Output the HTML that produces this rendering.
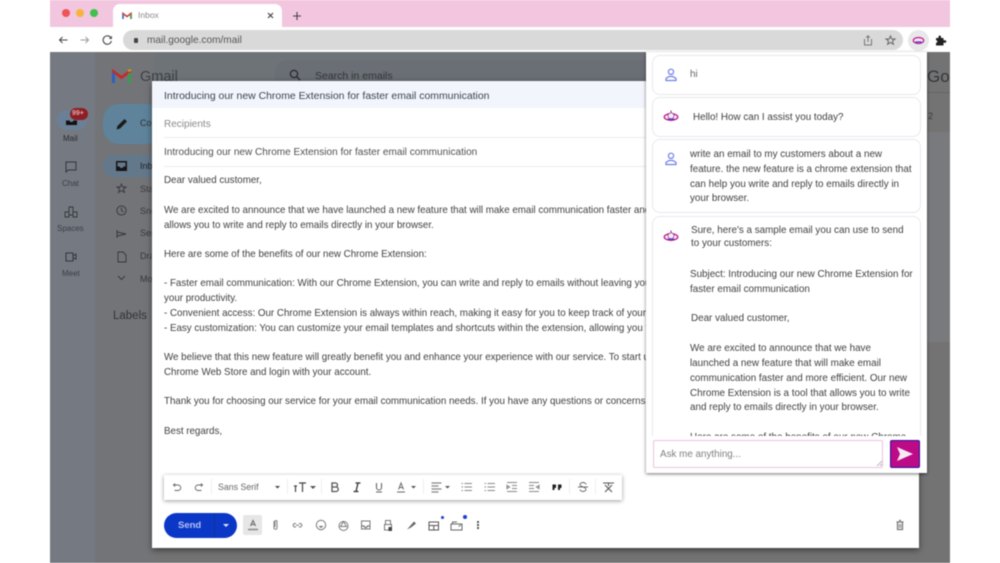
<!DOCTYPE html>
<html><head><meta charset="utf-8">
<style>
html,body{margin:0;padding:0;width:1000px;height:563px;overflow:hidden;background:#fff;font-family:"Liberation Sans",sans-serif}
#r{position:relative;width:1000px;height:563px;overflow:hidden;filter:blur(.65px)}
#r div,#r span.a{position:absolute}
.t{white-space:nowrap;font-size:9.78px;color:#404040;line-height:12px;margin-top:1px}
.g{white-space:nowrap;font-size:8px;color:#2a2e33;line-height:10px}
.c{white-space:nowrap;font-size:9.85px;color:#404040;line-height:12px;margin-top:1px}
.card{background:#fff;border:1px solid #e9e9ee;border-radius:8px;box-sizing:border-box}
svg{position:absolute;overflow:visible}
</style></head><body>
<div id="r">
<div style="left:50px;top:0;width:900px;height:27px;background:#f1c6de"></div>
<div style="left:50px;top:27px;width:900px;height:25px;background:#fff"></div>
<div style="left:62px;top:9px;width:8px;height:8px;border-radius:50%;background:#f0535a"></div>
<div style="left:76px;top:9px;width:8px;height:8px;border-radius:50%;background:#f5b53c"></div>
<div style="left:90px;top:9px;width:8px;height:8px;border-radius:50%;background:#3fc04d"></div>
<div style="left:113px;top:4px;width:169px;height:23px;background:#fff;border-radius:7px 7px 0 0"></div>
<svg style="left:122px;top:12px" width="10" height="8" viewBox="0 0 10 8"><path d="M1 7V1.5L5 4.5 9 1.5V7" fill="none" stroke="#d8392c" stroke-width="1.6"/><path d="M1 7V2" stroke="#3b78e0" stroke-width="1.6"/><path d="M9 7V2" stroke="#34a853" stroke-width="1.6"/></svg>
<div class="g" style="left:138px;top:10px;color:#8a8a8a;font-size:8.5px">Inbox</div>
<svg style="left:267px;top:12px" width="7" height="7"><path d="M1 1L6 6M6 1L1 6" stroke="#444" stroke-width="1.2"/></svg>
<svg style="left:292px;top:11px" width="10" height="10"><path d="M5 1V9M1 5H9" stroke="#444" stroke-width="1.1"/></svg>
<svg style="left:58px;top:35px" width="10" height="10"><path d="M9.5 5H1.500M4.500 2L1.500 5 4.500 8" fill="none" stroke="#444" stroke-width="1"/></svg>
<svg style="left:80px;top:35px" width="10" height="10"><path d="M.5 5H8.500M5.500 2L8.500 5 5.500 8" fill="none" stroke="#999" stroke-width="1"/></svg>
<svg style="left:102px;top:35px" width="11" height="10"><path d="M9 3A4.200 4.200 0 1 0 9.400 6" fill="none" stroke="#555" stroke-width="1.200"/><path d="M10 .8V4H6.800Z" fill="#555"/></svg>
<div style="left:123px;top:30px;width:780px;height:20px;border-radius:10px;background:#d9d9d9"></div>
<div style="left:133.500px;top:38px;width:4px;height:5px;background:#444;border-radius:1px"></div>
<div class="g" style="left:147px;top:36px;font-size:10.100px;color:#555">mail.google.com/mail</div>
<svg style="left:863px;top:35px" width="10" height="11"><path d="M2 4.500H1.500V10H8.500V4.500H8M5 7V1M3.200 2.600L5 .8 6.800 2.600" fill="none" stroke="#777" stroke-width="1"/></svg>
<svg style="left:885px;top:35px" width="11" height="10"><path d="M5.500 1L6.800 4H10L7.500 6 8.400 9.300 5.500 7.500 2.600 9.300 3.500 6 1 4H4.200Z" fill="none" stroke="#666" stroke-width="1"/></svg>
<div style="left:908px;top:30px;width:21px;height:21px;border-radius:50%;background:#e8e8ea"></div>
<svg style="left:912px;top:35px" width="13" height="10" viewBox="0 0 13 10"><ellipse cx="6.500" cy="5.500" rx="5.200" ry="3" fill="#f4e6f0" stroke="#c0168f" stroke-width="1.200"/><path d="M3.500 7H9.500" stroke="#3131c8" stroke-width="1.200"/></svg>
<svg style="left:935px;top:35px" width="11" height="11"><path d="M1 3H3.500V1.500A1.300 1.300 0 0 1 6 1.500V3H8.500V5.200H10A1.300 1.300 0 0 1 10 7.800H8.500V10.500H1V7.800A1.300 1.300 0 0 0 1 5.200Z" fill="#222"/></svg>

<div style="left:50px;top:52px;width:900px;height:511px;background:#737373"></div>
<div style="left:50px;top:52px;width:45px;height:511px;background:#757a82"></div>
<div style="left:95px;top:52px;width:60px;height:511px;background:#737478"></div>
<div style="left:155px;top:52px;width:500px;height:30px;background:#6e7378"></div>
<svg style="left:111px;top:68px" width="21" height="16" viewBox="0 0 21 16"><path d="M2.500 15V3.500L10.500 9.500 18.500 3.500V15" fill="none" stroke="#c62a2a" stroke-width="2.800"/><path d="M2.500 15V5" stroke="#2a62c0" stroke-width="3"/><path d="M18.500 15V5" stroke="#3d9a50" stroke-width="3"/><path d="M17 3L20 2" stroke="#c4a01c" stroke-width="2.200"/></svg>
<div class="g" style="left:140px;top:69px;font-size:14.500px;line-height:16px;color:#3c4044">Gmail</div>
<div style="left:275px;top:60px;width:380px;height:30px;border-radius:12px 0 0 0;background:#6a6f75"></div>
<svg style="left:289px;top:69px" width="12" height="12"><circle cx="5" cy="5" r="3.600" fill="none" stroke="#26282b" stroke-width="1.200"/><path d="M7.700 7.700L11 11" stroke="#26282b" stroke-width="1.300"/></svg>
<div class="g" style="left:315px;top:70px;font-size:10.500px;line-height:13px;color:#33363a">Search in emails</div>
<div class="g" style="left:927px;top:68px;font-size:17px;line-height:18px;color:#33363a">Go</div>
<div class="g" style="left:928px;top:111px;font-size:9px;color:#3a3a3a">2</div>
<div style="left:927px;top:92px;width:23px;height:1px;background:#666"></div>
<div style="left:927px;top:132px;width:23px;height:210px;background:#797a7e"></div>

<div style="left:57px;top:110px;width:30px;height:20px;border-radius:10px;background:#6b8096"></div>
<svg style="left:66px;top:115px" width="11" height="10"><path d="M0 2H11V10H0Z" fill="#111"/><path d="M0 2H11V6H8L6.500 7.500H4.500L3 6H0Z" fill="#6b8096"/><path d="M0 6H3L4.500 7.500H6.500L8 6H11" stroke="#111" fill="none"/></svg>
<div style="left:70px;top:108px;width:18px;height:12px;border-radius:6px;background:#8e1f24"></div>
<div class="g" style="left:72px;top:109px;font-size:7px;font-weight:bold;color:#d8a9aa">99+</div>
<div class="g" style="left:63px;top:134px;font-size:8px;color:#2a2a2a">Mail</div>
<svg style="left:65px;top:161px" width="12" height="12"><path d="M1 1H11V9H3L1 11Z" fill="none" stroke="#33363b" stroke-width="1"/></svg>
<div class="g" style="left:62px;top:179px;color:#3a3e44">Chat</div>
<svg style="left:64px;top:206px" width="14" height="12"><path d="M1 6H5V11H1ZM9 6H13V11H9ZM5 1H9V9H5Z" fill="none" stroke="#33363b" stroke-width=".9"/></svg>
<div class="g" style="left:57px;top:224px;color:#3a3e44">Spaces</div>
<svg style="left:65px;top:251px" width="13" height="12"><path d="M1 2H8V10H1Z M8 5L11 3V8L8 7" fill="none" stroke="#33363b" stroke-width="1"/></svg>
<div class="g" style="left:62px;top:269px;color:#3a3e44">Meet</div>
<div style="left:103px;top:104px;width:60px;height:40px;border-radius:16px;background:#5f839b"></div>
<svg style="left:115px;top:117px" width="14" height="14"><path d="M1.500 12.500L2.500 9 9.500 2 12 4.500 5 11.500Z" fill="#1a1a1a"/></svg>
<div class="g" style="left:140px;top:118px;font-size:9px;color:#2e3135">Compose</div>
<div style="left:103px;top:155px;width:60px;height:22px;border-radius:11px 0 0 11px;background:#64788c"></div>
<svg style="left:116px;top:160px" width="11" height="11"><path d="M0 1H11V11H0Z" fill="#151515"/><path d="M1.500 2.500H9.500V6.500H7.500L6.500 8H4.500L3.500 6.500H1.500Z" fill="#64788c"/></svg>
<div class="g" style="left:140px;top:161px;font-size:9px;color:#1d2023">Inbox</div>
<svg style="left:116px;top:183px" width="11" height="11"><path d="M5.500 1L6.800 4H10L7.500 6 8.400 9.500 5.500 7.500 2.600 9.500 3.500 6 1 4H4.200Z" fill="none" stroke="#33363b" stroke-width=".9"/></svg>
<div class="g" style="left:140px;top:184px;font-size:9px;color:#36393d">Starred</div>
<svg style="left:116px;top:205px" width="11" height="11"><circle cx="5.500" cy="5.500" r="4.600" fill="none" stroke="#33363b" stroke-width=".9"/><path d="M5.500 2.500V5.800L7.500 7" fill="none" stroke="#33363b" stroke-width=".9"/></svg>
<div class="g" style="left:140px;top:206px;font-size:9px;color:#36393d">Snoozed</div>
<svg style="left:116px;top:229px" width="11" height="10"><path d="M1 1V9M1 3L10 5 1 7" fill="none" stroke="#33363b" stroke-width=".9"/></svg>
<div class="g" style="left:140px;top:228px;font-size:9px;color:#36393d">Sent</div>
<svg style="left:117px;top:251px" width="10" height="12"><path d="M1 1H6L9 4V11H1Z" fill="none" stroke="#33363b" stroke-width=".9"/></svg>
<div class="g" style="left:140px;top:251px;font-size:9px;color:#36393d">Drafts</div>
<svg style="left:117px;top:275px" width="9" height="6"><path d="M1 1L4.500 4.500 8 1" fill="none" stroke="#33363b" stroke-width=".9"/></svg>
<div class="g" style="left:140px;top:274px;font-size:9px;color:#36393d">More</div>
<div class="g" style="left:113px;top:309px;font-size:11.500px;line-height:14px;color:#303338">Labels</div>

<div style="left:152px;top:81px;width:767px;height:467px;background:#fff;box-shadow:0 2px 6px rgba(0,0,0,.5)"></div>
<div style="left:152px;top:81px;width:500px;height:27px;background:#f2f6fc"></div>
<div class="t" style="left:164px;top:90px;color:#3a4152;font-size:10.440px">Introducing our new Chrome Extension for faster email communication</div>
<div class="t" style="left:164px;top:118px;color:#8a8a8a;font-size:10px">Recipients</div>
<div style="left:164px;top:137px;width:490px;height:1px;background:#ececec"></div>
<div class="t" style="left:164px;top:146px;color:#505050;font-size:10.050px">Introducing our new Chrome Extension for faster email communication</div>
<div style="left:164px;top:166px;width:490px;height:1px;background:#ececec"></div>
<div class="t" style="left:164px;top:174px">Dear valued customer,</div>
<div class="t" style="left:164px;top:204px">We are excited to announce that we have launched a new feature that will make email communication faster and more efficient. Our new Chrome Extension is a tool that</div>
<div class="t" style="left:164px;top:219px">allows you to write and reply to emails directly in your browser.</div>
<div class="t" style="left:164px;top:248px">Here are some of the benefits of our new Chrome Extension:</div>
<div class="t" style="left:164px;top:277px">- Faster email communication: With our Chrome Extension, you can write and reply to emails without leaving your browser, saving time and</div>
<div class="t" style="left:164px;top:292px">your productivity.</div>
<div class="t" style="left:164px;top:307px">- Convenient access: Our Chrome Extension is always within reach, making it easy for you to keep track of your emails.</div>
<div class="t" style="left:164px;top:322px">- Easy customization: You can customize your email templates and shortcuts within the extension, allowing you to work faster.</div>
<div class="t" style="left:164px;top:351px">We believe that this new feature will greatly benefit you and enhance your experience with our service. To start using it, visit the</div>
<div class="t" style="left:164px;top:366px">Chrome Web Store and login with your account.</div>
<div class="t" style="left:164px;top:395px">Thank you for choosing our service for your email communication needs. If you have any questions or concerns, please contact us.</div>
<div class="t" style="left:164px;top:425px">Best regards,</div>

<div style="left:164px;top:475px;width:458px;height:25px;background:#fff;box-shadow:0 1px 4px rgba(0,0,0,.4)"></div>
<svg style="left:170px;top:480px" width="450" height="14" viewBox="0 0 450 14" fill="none" stroke="#666" stroke-width=".9">
<path d="M3.500 5H8A2.500 2.500 0 0 1 8 10.500H4.500M5 3.500L3.500 5 5 6.500"/>
<path d="M32.500 5H28A2.500 2.500 0 0 0 28 10.500H31.500M31 3.500L32.500 5 31 6.500"/>
<path d="M125.500 6V12M124 6H127M129 3H136M132.500 3V12" stroke="#444" stroke-width="1.200"/>
<path d="M140 6H146L143 9Z" fill="#555" stroke="none"/>
<path d="M162 3H165.500A2 2 0 0 1 165.500 7H162ZM162 7H166A2.200 2.200 0 0 1 166 11.500H162Z" stroke="#555" stroke-width="1.300"/>
<path d="M185.500 3H190.500M188 3L186 11.500M183.500 11.500H188.500" stroke="#333" stroke-width="1.300"/>
<path d="M206.500 3V7.500A2.500 2.500 0 0 0 211.500 7.500V3M206 12H212" stroke="#666" stroke-width="1.100"/>
<path d="M228.500 9.500L231 3 233.500 9.500M229.500 7.500H232.500M227 12H235" stroke-width="1"/>
<path d="M241 6H246L243.500 8.500Z" fill="#555" stroke="none"/>
<path d="M261.500 3H271.500M261.500 6H268.500M261.500 9H271.500M261.500 12H268.500" stroke="#888" stroke-width="1.200"/>
<path d="M275 6H280L277.500 8.500Z" fill="#555" stroke="none"/>
<path d="M294.500 3.500H302M294.500 7H302M294.500 10.500H302M291.500 3.500H293M291.500 7H293M291.500 10.500H293" stroke="#888"/>
<path d="M317.500 3.500H325M317.500 7H325M317.500 10.500H325M314.500 3.500H316M314.500 7H316M314.500 10.500H316" stroke="#888"/>
<path d="M337 2.500H347M342 5.500H347M342 8.500H347M337 11.500H347M337 5.500V8.500L339.500 7Z" stroke="#888" stroke-width="1.100"/>
<path d="M359 2.500H369M359 5.500H364M359 8.500H364M359 11.500H369M369 5.500V8.500L366.500 7Z" stroke="#888" stroke-width="1.100"/>
<path d="M382.500 4.500H386V8H384.500V10H382.500ZM388 4.500H391.500V8H390V10H388Z" fill="#222" stroke="none"/>
<path d="M416 4.500A3 2 0 0 0 410 4.500C410 7 416 7 416 9.500A3 2 0 0 1 410 9.500M408 7H418" stroke="#666"/>
<path d="M433 3H444M438.500 3V6M435 12L442 5M435 5L442 12" stroke="#555" stroke-width="1.100"/>
</svg>
<div class="g" style="left:218px;top:482px;font-size:8.800px;color:#666">Sans Serif</div>
<svg style="left:275px;top:486px" width="6" height="4"><path d="M0 0H5L2.500 2.500Z" fill="#444"/></svg>
<div style="left:211px;top:479px;width:1px;height:15px;background:#eee"></div>
<div style="left:287px;top:479px;width:1px;height:15px;background:#eee"></div>
<div style="left:321px;top:479px;width:1px;height:15px;background:#eee"></div>
<div style="left:423px;top:479px;width:1px;height:15px;background:#eee"></div>
<div style="left:569px;top:479px;width:1px;height:15px;background:#eee"></div>
<div style="left:595px;top:479px;width:1px;height:15px;background:#eee"></div>

<div style="left:164px;top:513px;width:73px;height:25px;border-radius:13px;background:#0b37c7"></div>
<div style="left:214px;top:513px;width:1px;height:25px;background:#123095"></div>
<div class="g" style="left:178px;top:520px;font-size:9.500px;line-height:11px;font-weight:bold;color:#b4c2f0">Send</div>
<svg style="left:223px;top:524px" width="6" height="4"><path d="M0 0H6L3 3Z" fill="#e0e6fa"/></svg>
<div style="left:243px;top:515px;width:19px;height:20px;background:#e6e6e6;border-radius:2px"></div>
<svg style="left:245px;top:517px" width="220" height="16" viewBox="0 0 220 16" fill="none" stroke="#777" stroke-width="1">
<path d="M5.500 9L8 3.500 10.500 9M6.500 7.500H9.500" stroke="#666"/><path d="M3 12.500H13" stroke="#888" stroke-width="1.500"/>
<path d="M29 4V11.500A1.800 1.800 0 0 0 32 11.500V4A1.300 1.300 0 0 0 30 4V10" stroke="#888" stroke-width="1.100"/>
<path d="M51 6.500H50A1.700 1.700 0 0 0 50 10H51M54 6.500H55A1.700 1.700 0 0 1 55 10H54M51 8.200H54" stroke="#777"/>
<circle cx="76" cy="8" r="4.700"/><path d="M73.500 9H78.500L76 11Z" fill="#666" stroke="none"/>
<circle cx="98.500" cy="9" r="4.500"/><path d="M98.500 4.500L101.500 9.500H95.500Z" stroke-width=".9"/>
<path d="M116.500 4H125V12H116.500Z"/><path d="M116.500 9H119L120 10.500H121.500L122.500 9H125" stroke-width="1.200"/>
<path d="M140.500 7.500V3.500H145.500V7.500M139.500 7.500H146.500V13H139.500Z"/><path d="M143.500 10H147V14H143.500Z" fill="#444" stroke="none"/>
<path d="M162 12.500L165.500 8.500 169 4.500 171 6.500 166 10.500Z" fill="#666" stroke="none"/>
<path d="M184 5H193.500V13H184ZM184 8.500H193.500M188.800 8.500V13" stroke="#555"/>
<path d="M206 7H217V13H206ZM207.500 7V5H212M213.500 9.500L216 8" stroke="#666"/>
</svg>
<div style="left:441px;top:516px;width:3px;height:3px;border-radius:50%;background:#1a3ed0"></div>
<div style="left:463px;top:515px;width:4px;height:4px;border-radius:50%;background:#1a3ed0"></div>
<div style="left:477px;top:521px;width:2px;height:2px;background:#555;box-shadow:0 3px 0 #555,0 6px 0 #555"></div>
<svg style="left:895px;top:519px" width="10" height="12"><path d="M2.500 3.500V10.500H7.500V3.500M1.500 3H8.500M4 1.500H6" fill="none" stroke="#777" stroke-width="1.200"/><path d="M4.200 5V9M5.800 5V9" stroke="#888"/></svg>

<div style="left:646px;top:52px;width:281px;height:421px;background:#fff;box-shadow:0 1px 3px rgba(0,0,0,.55)"></div>
<div class="card" style="left:652px;top:55px;width:269px;height:40px"></div>
<div class="card" style="left:652px;top:97px;width:269px;height:40px"></div>
<div class="card" style="left:652px;top:139px;width:269px;height:74px"></div>
<div class="card" style="left:652px;top:216px;width:269px;height:240px;border-bottom:0;border-radius:8px 8px 0 0"></div>
<svg style="left:664px;top:68px" width="14" height="14"><circle cx="7" cy="3.800" r="2.600" fill="none" stroke="#6f7fe6" stroke-width="1.200"/><path d="M2 12.500H12V10.500L9 8.500H5L2 10.500Z" fill="none" stroke="#6f7fe6" stroke-width="1.200"/></svg>
<svg style="left:664px;top:152px" width="14" height="14"><circle cx="7" cy="3.800" r="2.600" fill="none" stroke="#6f7fe6" stroke-width="1.200"/><path d="M2 12.500H12V10.500L9 8.500H5L2 10.500Z" fill="none" stroke="#6f7fe6" stroke-width="1.200"/></svg>
<svg style="left:662px;top:109px" width="18" height="14" viewBox="0 0 18 14"><path d="M9 1.500V4" stroke="#8a2a80"/><ellipse cx="9" cy="8" rx="6.800" ry="3.300" fill="#fbeef6" stroke="#c2188e" stroke-width="1.300"/><circle cx="9" cy="6.800" r="3" fill="#f6ecf4" stroke="#8a2a80" stroke-width=".7"/><path d="M5.500 10.200H12.500" stroke="#3a3ac8" stroke-width="1.100"/></svg>
<svg style="left:662px;top:229px" width="18" height="14" viewBox="0 0 18 14"><path d="M9 1.500V4" stroke="#8a2a80"/><ellipse cx="9" cy="8" rx="6.800" ry="3.300" fill="#fbeef6" stroke="#c2188e" stroke-width="1.300"/><circle cx="9" cy="6.800" r="3" fill="#f6ecf4" stroke="#8a2a80" stroke-width=".7"/><path d="M5.500 10.200H12.500" stroke="#3a3ac8" stroke-width="1.100"/></svg>
<div class="c" style="left:690px;top:68px;color:#666">hi</div>
<div class="c" style="left:693px;top:111px">Hello! How can I assist you today?</div>
<div class="c" style="left:690px;top:148px">write an email to my customers about a new</div>
<div class="c" style="left:690px;top:163px">feature. the new feature is a chrome extension that</div>
<div class="c" style="left:690px;top:178px">can help you write and reply to emails directly in</div>
<div class="c" style="left:690px;top:192px">your browser.</div>
<div class="c" style="left:691px;top:224px">Sure, here's a sample email you can use to send</div>
<div class="c" style="left:691px;top:237px">to your customers:</div>
<div class="c" style="left:690px;top:268px">Subject: Introducing our new Chrome Extension for</div>
<div class="c" style="left:690px;top:283px">faster email communication</div>
<div class="c" style="left:691px;top:312px">Dear valued customer,</div>
<div class="c" style="left:690px;top:342px">We are excited to announce that we have</div>
<div class="c" style="left:690px;top:357px">launched a new feature that will make email</div>
<div class="c" style="left:690px;top:372px">communication faster and more efficient. Our new</div>
<div class="c" style="left:690px;top:387px">Chrome Extension is a tool that allows you to write</div>
<div class="c" style="left:690px;top:401px">and reply to emails directly in your browser.</div>
<div class="c" style="left:690px;top:431px">Here are some of the benefits of our new Chrome</div>
<div style="left:647px;top:436px;width:279px;height:36px;background:#fff"></div>
<div style="left:653px;top:440px;width:230px;height:28px;box-sizing:border-box;border:1px solid #eac3dd;border-radius:2px;background:#fff"></div>
<div class="c" style="left:660px;top:448px;color:#808080">Ask me anything...</div>
<svg style="left:877px;top:461px" width="6" height="6"><path d="M5 0L0 5M5 3L3 5" stroke="#999" stroke-width=".7"/></svg>
<div style="left:890px;top:440px;width:30px;height:28px;box-sizing:border-box;border:1.500px solid #2a119f;border-radius:2px;background:#bd0a86"></div>
<svg style="left:897px;top:446px" width="17" height="16"><path d="M0 1L16 8 0 15 3 8Z" fill="#f6e9f3"/></svg>
</div>
</body></html>
